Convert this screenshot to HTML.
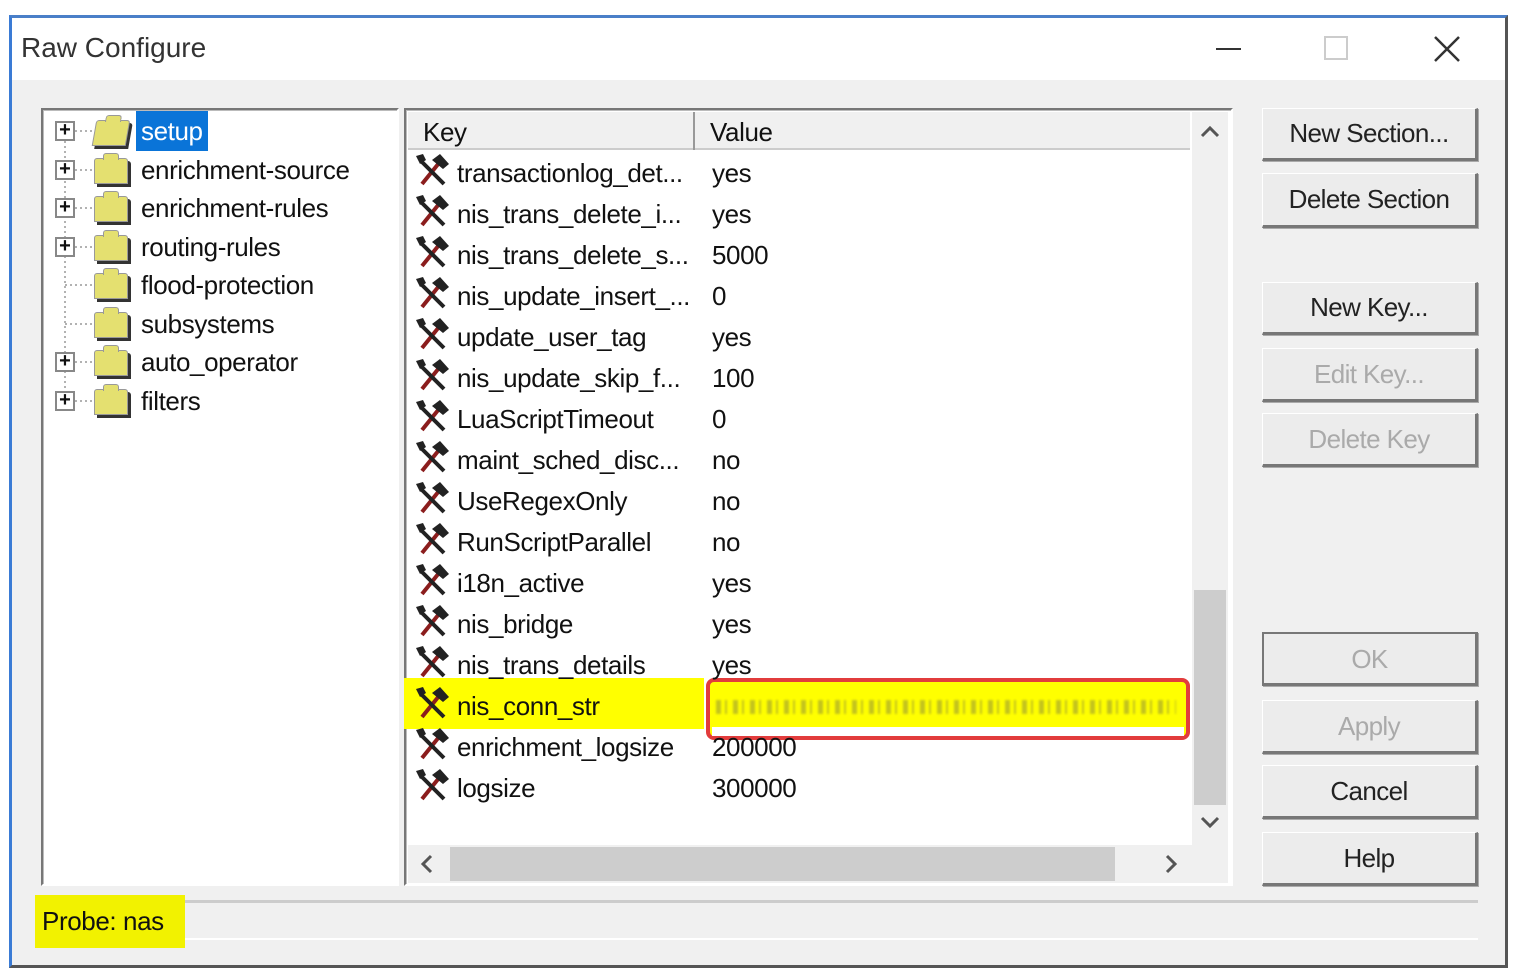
<!DOCTYPE html>
<html><head><meta charset="utf-8"><style>
*{margin:0;padding:0;box-sizing:border-box}
body{width:1517px;height:977px;background:#fff;position:relative;overflow:hidden;font-family:"Liberation Sans",sans-serif;color:#111}
.a{position:absolute}
.win{left:9px;top:15px;width:1499px;height:953px;border:3px solid #555;border-left-color:#3a7bd5;border-top-color:#4a7fc8;background:#f0f0f0}
.title{left:12px;top:18px;width:1493px;height:62px;background:#fff}
.panel{background:#fff;border:2px solid #fff;border-top-color:#777;border-left-color:#777;box-shadow:inset 1px 1px 0 #bbb}
.t{font-size:26px;letter-spacing:-0.4px;white-space:nowrap}
.btn{left:1262px;width:216px;background:#ececec;border:1px solid #fff;border-right:3px solid #777;border-bottom:3px solid #777;box-shadow:1px 1px 0 #aaa;font-size:26px;letter-spacing:-0.6px;text-align:center;color:#222}
.dis{color:#aaa}
.plus{width:20px;height:20px;border:2px solid #888;background:#fff;font-size:20px;line-height:14px;text-align:center;font-weight:bold;color:#111}
.fold{width:34px;height:26px;background:#e4e070;border:1px solid #999;box-shadow:3px 3px 0 #333;border-radius:3px 3px 0 0}
.fold:before{content:"";position:absolute;left:8px;top:-6px;width:14px;height:6px;background:#e4e070;border:1px solid #999;border-bottom:none;border-radius:3px 3px 0 0}
.ic{width:36px;height:32px}
</style></head><body>
<div class="a win"></div>
<div class="a title"></div>
<div class="a t" style="left:21px;top:32px;font-size:28px;color:#333;letter-spacing:0">Raw Configure</div>
<div class="a" style="left:1216px;top:48px;width:25px;height:2px;background:#333"></div>
<div class="a" style="left:1324px;top:36px;width:24px;height:24px;border:2px solid #ccc"></div>
<svg class="a" style="left:1432px;top:34px" width="30" height="30"><path d="M3 3L27 27M27 3L3 27" stroke="#333" stroke-width="2.5"/></svg>

<div class="a panel" style="left:41px;top:108px;width:358px;height:778px"></div>
<svg class="a" style="left:55px;top:120px" width="40" height="300"><path d="M10 21V280" stroke="#999" stroke-width="1.5" stroke-dasharray="2 3"/><path d="M20 11H38M20 50H38M20 88H38M20 127H38M10 165H38M10 204H38M20 242H38M20 281H38" stroke="#999" stroke-width="1.5" stroke-dasharray="2 3"/></svg>
<div class="a plus" style="left:55px;top:121px">+</div>
<div class="a plus" style="left:55px;top:160px">+</div>
<div class="a plus" style="left:55px;top:198px">+</div>
<div class="a plus" style="left:55px;top:237px">+</div>
<div class="a plus" style="left:55px;top:352px">+</div>
<div class="a plus" style="left:55px;top:391px">+</div>
<div class="a fold" style="left:94px;top:120px;transform:skewX(-10deg)"></div>
<div class="a fold" style="left:94px;top:158px"></div>
<div class="a fold" style="left:94px;top:196px"></div>
<div class="a fold" style="left:94px;top:235px"></div>
<div class="a fold" style="left:94px;top:273px"></div>
<div class="a fold" style="left:94px;top:312px"></div>
<div class="a fold" style="left:94px;top:350px"></div>
<div class="a fold" style="left:94px;top:389px"></div>
<div class="a" style="left:136px;top:111px;width:72px;height:40px;background:#0a74d8"></div>
<div class="a t" style="left:141px;top:116px;color:#fff">setup</div>
<div class="a t" style="left:141px;top:155px">enrichment-source</div>
<div class="a t" style="left:141px;top:193px">enrichment-rules</div>
<div class="a t" style="left:141px;top:232px">routing-rules</div>
<div class="a t" style="left:141px;top:270px">flood-protection</div>
<div class="a t" style="left:141px;top:309px">subsystems</div>
<div class="a t" style="left:141px;top:347px">auto_operator</div>
<div class="a t" style="left:141px;top:386px">filters</div>

<div class="a panel" style="left:404px;top:108px;width:829px;height:778px"></div>
<div class="a" style="left:408px;top:112px;width:782px;height:38px;background:#f0f0f0;border-bottom:2px solid #ccc"></div>
<div class="a" style="left:693px;top:112px;width:2px;height:38px;background:#999"></div>
<div class="a t" style="left:423px;top:117px">Key</div>
<div class="a t" style="left:710px;top:117px">Value</div>
<div class="a" style="left:1192px;top:112px;width:36px;height:733px;background:#f0f0f0"></div>
<div class="a" style="left:1194px;top:590px;width:32px;height:215px;background:#cdcdcd"></div>
<svg class="a" style="left:1198px;top:122px" width="24" height="20"><path d="M4 14L12 6L20 14" stroke="#555" stroke-width="3" fill="none"/></svg>
<svg class="a" style="left:1198px;top:812px" width="24" height="20"><path d="M4 6L12 14L20 6" stroke="#555" stroke-width="3" fill="none"/></svg>
<div class="a" style="left:408px;top:845px;width:820px;height:38px;background:#f0f0f0"></div>
<div class="a" style="left:450px;top:847px;width:665px;height:34px;background:#cdcdcd"></div>
<svg class="a" style="left:416px;top:852px" width="24" height="24"><path d="M15 4L7 12L15 20" stroke="#555" stroke-width="3" fill="none"/></svg>
<svg class="a" style="left:1158px;top:852px" width="24" height="24"><path d="M9 4L17 12L9 20" stroke="#555" stroke-width="3" fill="none"/></svg>
<div class="a" style="left:404px;top:678px;width:300px;height:51px;background:#ffff00"></div>
<div class="a" style="left:706px;top:678px;width:484px;height:62px;border:4px solid #e23c3c;border-radius:8px;background:#ffff00"></div>
<div class="a" style="left:712px;top:727px;width:472px;height:9px;background:#fff"></div>
<div class="a" style="left:716px;top:700px;width:460px;height:14px;background:repeating-linear-gradient(90deg,#555 0 5px,transparent 5px 9px,#555 9px 11px,transparent 11px 17px);opacity:.35;filter:blur(1px)"></div>

<div id="rows"></div>
<script>
var k=[["transactionlog_det...","yes"],["nis_trans_delete_i...","yes"],["nis_trans_delete_s...","5000"],["nis_update_insert_...","0"],["update_user_tag","yes"],["nis_update_skip_f...","100"],["LuaScriptTimeout","0"],["maint_sched_disc...","no"],["UseRegexOnly","no"],["RunScriptParallel","no"],["i18n_active","yes"],["nis_bridge","yes"],["nis_trans_details","yes"],["nis_conn_str",""],["enrichment_logsize","200000"],["logsize","300000"]];
var h="";
for(var i=0;i<k.length;i++){var y=158+i*41;
h+='<svg class="a ic" style="left:414px;top:'+(y-4)+'px" viewBox="0 0 36 32"><path d="M8 30L25 9" stroke="#8b1d1d" stroke-width="4"/><path d="M18 6L26 0L35 10L29 15Z" fill="#222"/><path d="M8 8L30 30" stroke="#222" stroke-width="4"/><path d="M2 2L9 0L12 6L6 10Z" fill="#222"/></svg>';
h+='<div class="a t" style="left:457px;top:'+y+'px">'+k[i][0]+'</div>';
h+='<div class="a t" style="left:712px;top:'+y+'px">'+k[i][1]+'</div>';}
document.getElementById("rows").innerHTML=h;
</script>

<div class="a btn" style="top:108px;height:53px;line-height:48px">New Section...</div>
<div class="a btn" style="top:173px;height:55px;line-height:50px">Delete Section</div>
<div class="a btn" style="top:282px;height:53px;line-height:48px">New Key...</div>
<div class="a btn dis" style="top:348px;height:54px;line-height:50px">Edit Key...</div>
<div class="a btn dis" style="top:413px;height:54px;line-height:50px">Delete Key</div>
<div class="a btn dis" style="top:632px;height:54px;line-height:50px;border:2px solid #777;border-right-width:3px;border-bottom-width:3px">OK</div>
<div class="a btn dis" style="top:700px;height:54px;line-height:50px">Apply</div>
<div class="a btn" style="top:765px;height:54px;line-height:50px">Cancel</div>
<div class="a btn" style="top:832px;height:54px;line-height:50px">Help</div>

<div class="a" style="left:40px;top:900px;width:1438px;height:40px;border-top:3px solid #ccc;border-bottom:2px solid #fff"></div>
<div class="a" style="left:35px;top:895px;width:150px;height:53px;background:#f2f200"></div>
<div class="a t" style="left:42px;top:906px">Probe: nas</div>
</body></html>
